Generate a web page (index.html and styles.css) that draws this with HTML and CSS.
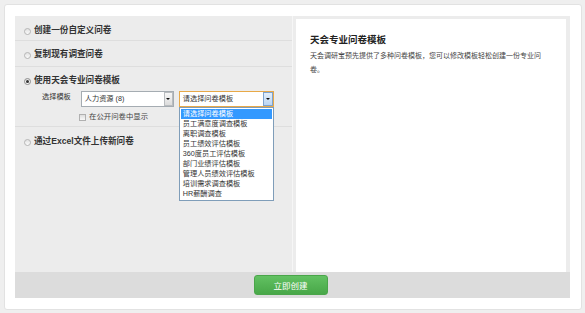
FILE: index.html
```html
<!DOCTYPE html>
<html lang="zh-CN">
<head>
    <meta charset="UTF-8">
    <title>创建问卷</title>
    <link rel="stylesheet" href="styles.css">
</head>
<body>
    <div class="card">
        <div class="frame">
            <div class="main">
                <!-- 左侧：创建方式 -->
                <div class="left">
                    <div class="row row1">
                        <span class="radio"></span><span class="rowTitle">创建一份自定义问卷</span>
                    </div>
                    <div class="row row2">
                        <span class="radio"></span><span class="rowTitle">复制现有调查问卷</span>
                    </div>
                    <div class="row row3">
                        <div class="line">
                            <span class="radio checked"></span><span class="rowTitle">使用天会专业问卷模板</span>
                        </div>
                        <div class="pick">
                            <span class="pickLabel">选择模板</span>
                            <div class="select sel1">
                                <span class="selText">人力资源 (8)</span>
                                <span class="arrow"></span>
                            </div>
                            <div class="select sel2">
                                <span class="selText">请选择问卷模板</span>
                                <span class="arrow hover"></span>
                                <ul class="dropList">
                                    <li class="on">请选择问卷模板</li>
                                    <li>员工满意度调查模板</li>
                                    <li>离职调查模板</li>
                                    <li>员工绩效评估模板</li>
                                    <li>360度员工评估模板</li>
                                    <li>部门业绩评估模板</li>
                                    <li>管理人员绩效评估模板</li>
                                    <li>培训需求调查模板</li>
                                    <li>HR薪酬调查</li>
                                </ul>
                            </div>
                        </div>
                        <div class="show">
                            <span class="check"></span><span>在公开问卷中显示</span>
                        </div>
                    </div>
                    <div class="row row4">
                        <span class="radio"></span><span class="rowTitle">通过Excel文件上传新问卷</span>
                    </div>
                </div>

                <!-- 右侧：说明 -->
                <div class="right">
                    <h2>天会专业问卷模板</h2>
                    <p>天会调研宝预先提供了多种问卷模板，您可以修改模板轻松创建一份专业问卷。</p>
                </div>
            </div>
            <div class="footer">
                <a href="#" class="btn">立即创建</a>
            </div>
        </div>
    </div>
</body>
</html>
```

FILE: styles.css
```css
* {
    margin: 0;
    padding: 0;
    box-sizing: border-box;
}
ul {
    list-style: none;
}
html, body {
    height: 100%;
}
body {
    background-color: #efefef;
    font-family: "Liberation Sans", "Noto Sans CJK SC", sans-serif;
    color: #333;
    padding: 4px 3px 3px 4px;
}
.card {
    width: 578px;
    height: 306px;
    background-color: #fff;
    border: 1px solid #e2e2e2;
    border-radius: 3px;
    padding: 11px 0 0 10px;
}
.frame {
    width: 555px;
    height: 282px;
    background-color: #ececec;
    display: flex;
    flex-direction: column;
}
.main {
    height: 256px;
    display: flex;
}
.left {
    width: 278px;
    border-right: 1px solid #f6f6f6;
}
.right {
    width: 270px;
    margin: 3px 0 0 3px;
    background-color: #fff;
    padding: 15px 20px 0 14px;
}

/* 左侧每一行 */
.row {
    border-bottom: 1px solid #dedede;
    padding-left: 9px;
}
.row1 {
    height: 25px;
    padding-top: 9px;
}
.row2 {
    height: 26px;
    padding-top: 8px;
}
.row3 {
    height: 60px;
    padding-top: 8px;
}
.row4 {
    border-bottom: none;
    padding-top: 9px;
}
.row1, .row2, .row4, .line {
    display: flex;
    align-items: flex-start;
}
.rowTitle {
    font-size: 8.6px;
    line-height: 10px;
    font-weight: bold;
    color: #333;
}
.radio {
    width: 7px;
    height: 7px;
    border-radius: 50%;
    border: 1px solid #b5b5b5;
    background: linear-gradient(#e2e2e2, #fafafa);
    margin: 3px 3px 0 0;
    position: relative;
}
.radio.checked {
    border-color: #8d8d8d;
}
.radio.checked::after {
    content: "";
    position: absolute;
    left: 1px;
    top: 1px;
    width: 3px;
    height: 3px;
    border-radius: 50%;
    background-color: #333;
}

/* 选择模板 */
.pick {
    display: flex;
    align-items: center;
    margin-top: 6px;
    height: 16px;
}
.pickLabel {
    font-size: 7.2px;
    line-height: 10px;
    margin: 0 10px 0 18px;
    color: #333;
    align-self: flex-start;
    margin-top: 1px;
}
.select {
    height: 16px;
    border: 1px solid #a5acb2;
    background-color: #fff;
    display: flex;
    align-items: center;
    position: relative;
}
.sel1 {
    width: 93px;
    margin-right: 5px;
}
.sel2 {
    width: 95px;
    border-color: #e8a948;
}
.selText {
    flex: 1;
    font-size: 7.2px;
    line-height: 10px;
    padding-left: 3px;
    color: #333;
}
.arrow {
    width: 9px;
    height: 14px;
    border: 1px solid #b9bcbf;
    background: linear-gradient(#f7f7f7, #dcdcdc);
    position: relative;
}
.arrow.hover {
    width: 10px;
    border-color: #7ea3cf;
    background: linear-gradient(#e2eefb, #bcd6f3);
}
.arrow::after {
    content: "";
    position: absolute;
    left: 50%;
    top: 5px;
    margin-left: -2px;
    border-left: 2px solid transparent;
    border-right: 2px solid transparent;
    border-top: 2px solid #111;
}
.dropList {
    position: absolute;
    left: -1px;
    top: 15px;
    width: 95px;
    border: 1px solid #7f9db9;
    background-color: #fff;
    padding: 1px 0;
    z-index: 10;
}
.dropList li {
    font-size: 7.2px;
    line-height: 10px;
    height: 10px;
    padding-left: 3px;
    color: #333;
}
.dropList li.on {
    background-color: #3399ff;
    color: #fff;
    margin: 0 1px;
    padding-left: 2px;
}

/* 在公开问卷中显示 */
.show {
    display: flex;
    align-items: center;
    margin: 5px 0 0 55px;
    font-size: 7.4px;
    line-height: 10px;
    color: #444;
}
.check {
    width: 7px;
    height: 7px;
    border: 1px solid #b0b0b0;
    background: linear-gradient(#dedede, #f8f8f8);
    margin-right: 3px;
}

/* 右侧说明 */
.right h2 {
    font-size: 9.5px;
    line-height: 12px;
    color: #222;
    font-weight: bold;
}
.right p {
    font-size: 7px;
    line-height: 14px;
    color: #444;
    margin-top: 3px;
    width: 236px;
}

/* 底部按钮 */
.footer {
    height: 26px;
    background-color: #dcdcdc;
    display: flex;
    justify-content: center;
    align-items: center;
    padding-right: 4px;
}
.btn {
    display: block;
    width: 74px;
    height: 20px;
    line-height: 20px;
    text-align: center;
    font-size: 8.5px;
    color: #fff;
    text-decoration: none;
    border-radius: 3px;
    border: 1px solid #4aa54a;
    background: linear-gradient(#62c162, #48a748);
}
```
